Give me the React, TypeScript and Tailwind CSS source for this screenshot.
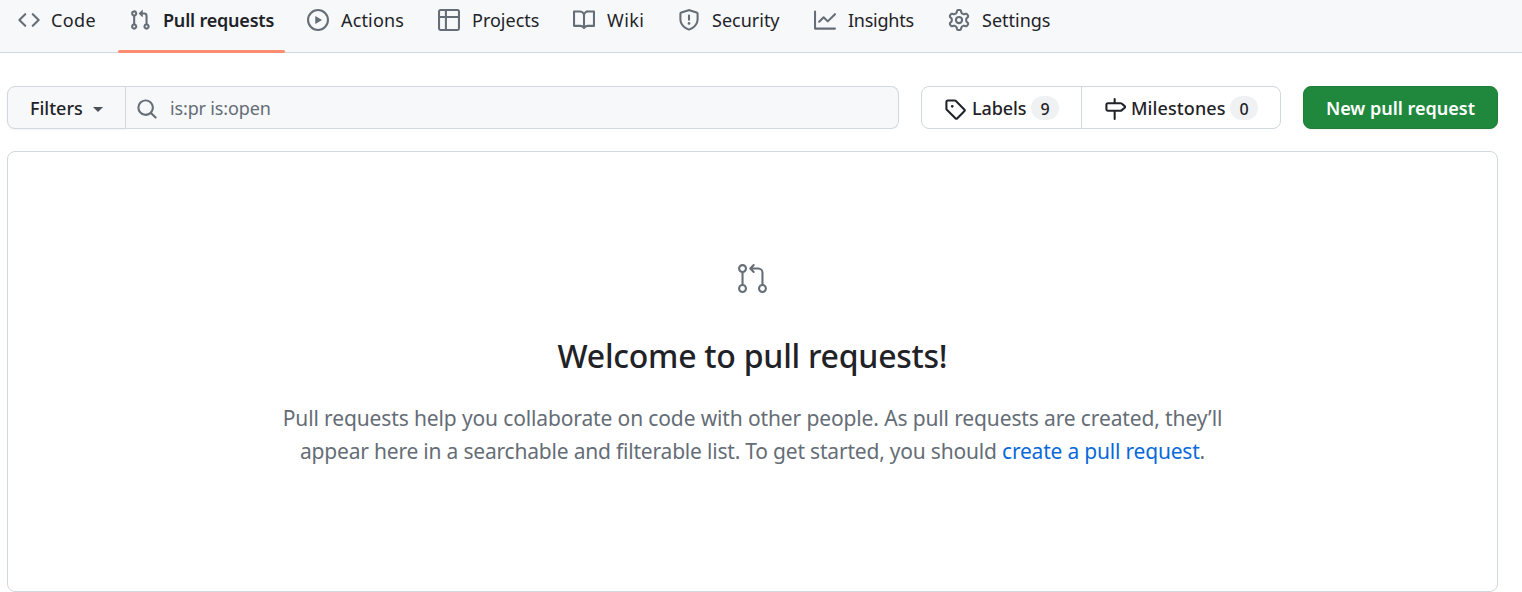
import React from "react";
import { GoGitPullRequest } from "react-icons/go";

const icons = {
  code: "m11.28 3.22 4.25 4.25a.75.75 0 0 1 0 1.06l-4.25 4.25a.749.749 0 0 1-1.275-.326.749.749 0 0 1 .215-.734L13.94 8l-3.72-3.72a.749.749 0 0 1 .326-1.275.749.749 0 0 1 .734.215Zm-6.56 0a.751.751 0 0 1 1.042.018.751.751 0 0 1 .018 1.042L2.06 8l3.72 3.72a.749.749 0 0 1-.326 1.275.749.749 0 0 1-.734-.215L.47 8.53a.75.75 0 0 1 0-1.06Z",
  pull: "M1.5 3.25a2.25 2.25 0 1 1 3 2.122v5.256a2.251 2.251 0 1 1-1.5 0V5.372A2.25 2.25 0 0 1 1.5 3.25Zm5.677-.177L9.573.677A.25.25 0 0 1 10 .854V2.5h1A2.5 2.5 0 0 1 13.5 5v5.628a2.251 2.251 0 1 1-1.5 0V5a1 1 0 0 0-1-1h-1v1.646a.25.25 0 0 1-.427.177L7.177 3.427a.25.25 0 0 1 0-.354ZM3.75 2.5a.75.75 0 1 0 0 1.5.75.75 0 0 0 0-1.5Zm0 9.5a.75.75 0 1 0 0 1.5.75.75 0 0 0 0-1.5Zm8.25.75a.75.75 0 1 0 1.5 0 .75.75 0 0 0-1.5 0Z",
  play: "M8 0a8 8 0 1 1 0 16A8 8 0 0 1 8 0ZM1.5 8a6.5 6.5 0 1 0 13 0 6.5 6.5 0 0 0-13 0Zm4.879-2.773 4.264 2.559a.25.25 0 0 1 0 .428l-4.264 2.559A.25.25 0 0 1 6 10.559V5.442a.25.25 0 0 1 .379-.215Z",
  table: "M0 1.75C0 .784.784 0 1.75 0h12.5C15.216 0 16 .784 16 1.75v12.5A1.75 1.75 0 0 1 14.25 16H1.75A1.75 1.75 0 0 1 0 14.25ZM6.5 6.5v8h7.75a.25.25 0 0 0 .25-.25V6.5Zm8-1.5V1.75a.25.25 0 0 0-.25-.25H6.5V5Zm-13 1.5v7.75c0 .138.112.25.25.25H5v-8ZM5 5V1.5H1.75a.25.25 0 0 0-.25.25V5Z",
  book: "M0 1.75A.75.75 0 0 1 .75 1h4.253c1.227 0 2.317.59 3 1.501A3.743 3.743 0 0 1 11.006 1h4.245a.75.75 0 0 1 .75.75v10.5a.75.75 0 0 1-.75.75h-4.507a2.25 2.25 0 0 0-1.591.659l-.622.621a.75.75 0 0 1-1.06 0l-.622-.621A2.25 2.25 0 0 0 5.258 13H.75a.75.75 0 0 1-.75-.75Zm7.251 10.324.004-5.073-.002-2.253A2.25 2.25 0 0 0 5.003 2.5H1.5v9h3.757a3.75 3.75 0 0 1 1.994.574ZM8.755 4.75l-.004 7.322a3.752 3.752 0 0 1 1.992-.572H14.5v-9h-3.495a2.25 2.25 0 0 0-2.25 2.25Z",
  shield: "M7.467.133a1.748 1.748 0 0 1 1.066 0l5.25 1.68A1.75 1.75 0 0 1 15 3.48V7c0 1.566-.32 3.182-1.303 4.682-.983 1.498-2.585 2.813-5.032 3.855a1.697 1.697 0 0 1-1.33 0c-2.447-1.042-4.049-2.357-5.032-3.855C1.32 10.182 1 8.566 1 7V3.48a1.75 1.75 0 0 1 1.217-1.667Zm.61 1.429a.25.25 0 0 0-.153 0l-5.25 1.68a.25.25 0 0 0-.174.238V7c0 1.358.275 2.666 1.057 3.86.784 1.194 2.121 2.34 4.366 3.297a.196.196 0 0 0 .154 0c2.245-.956 3.582-2.104 4.366-3.298C13.225 9.666 13.5 8.36 13.5 7V3.48a.251.251 0 0 0-.174-.237l-5.25-1.68ZM8.75 4.75v3a.75.75 0 0 1-1.5 0v-3a.75.75 0 0 1 1.5 0ZM9 10.5a1 1 0 1 1-2 0 1 1 0 0 1 2 0Z",
  graph: "M1.5 1.75V13.5h13.75a.75.75 0 0 1 0 1.5H.75a.75.75 0 0 1-.75-.75V1.75a.75.75 0 0 1 1.5 0Zm14.28 2.53-5.25 5.25a.75.75 0 0 1-1.06 0L7 7.06 4.28 9.78a.751.751 0 0 1-1.042-.018.751.751 0 0 1-.018-1.042l3.25-3.25a.75.75 0 0 1 1.06 0L10 7.94l4.72-4.72a.751.751 0 0 1 1.042.018.751.751 0 0 1 .018 1.042Z",
  gear: "M8 0a8.2 8.2 0 0 1 .701.031C9.444.095 9.99.645 10.16 1.29l.288 1.107c.018.066.079.158.212.224.231.114.454.243.668.386.123.082.233.09.299.071l1.103-.303c.644-.176 1.392.021 1.82.63.27.385.506.792.704 1.218.315.675.111 1.422-.364 1.891l-.814.806c-.049.048-.098.147-.088.294.016.257.016.515 0 .772-.01.147.038.246.088.294l.814.806c.475.469.679 1.216.364 1.891a7.977 7.977 0 0 1-.704 1.217c-.428.61-1.176.807-1.82.63l-1.102-.302c-.067-.019-.177-.011-.3.071a5.909 5.909 0 0 1-.668.386c-.133.066-.194.158-.211.224l-.29 1.106c-.168.646-.715 1.196-1.458 1.26a8.006 8.006 0 0 1-1.402 0c-.743-.064-1.289-.614-1.458-1.26l-.289-1.106c-.018-.066-.079-.158-.212-.224a5.738 5.738 0 0 1-.668-.386c-.123-.082-.233-.09-.299-.071l-1.103.303c-.644.176-1.392-.021-1.82-.63a8.12 8.12 0 0 1-.704-1.218c-.315-.675-.111-1.422.363-1.891l.815-.806c.05-.048.098-.147.088-.294a6.214 6.214 0 0 1 0-.772c.01-.147-.038-.246-.088-.294l-.815-.806C.635 6.045.431 5.298.746 4.623a7.92 7.92 0 0 1 .704-1.217c.428-.61 1.176-.807 1.82-.63l1.102.302c.067.019.177.011.3-.071.214-.143.437-.272.668-.386.133-.066.194-.158.211-.224l.29-1.106C6.009.645 6.556.095 7.299.03 7.53.01 7.764 0 8 0Zm-.571 1.525c-.036.003-.108.036-.137.146l-.289 1.105c-.147.561-.549.967-.998 1.189-.173.086-.34.183-.5.29-.417.278-.97.423-1.529.27l-1.103-.303c-.109-.03-.175.016-.195.045-.22.312-.412.644-.573.99-.014.031-.021.11.059.19l.815.806c.411.406.562.957.53 1.456a4.709 4.709 0 0 0 0 .582c.032.499-.119 1.05-.53 1.456l-.815.806c-.081.08-.073.159-.059.19.162.346.353.677.573.989.02.03.085.076.195.046l1.102-.303c.56-.153 1.113-.008 1.53.27.161.107.328.204.501.29.447.222.85.629.997 1.189l.289 1.105c.029.109.101.143.137.146a6.6 6.6 0 0 0 1.142 0c.036-.003.108-.036.137-.146l.289-1.105c.147-.561.549-.967.998-1.189.173-.086.34-.183.5-.29.417-.278.97-.423 1.529-.27l1.103.303c.109.029.175-.016.195-.045.22-.313.411-.644.573-.99.014-.031.021-.11-.059-.19l-.815-.806c-.411-.406-.562-.957-.53-1.456a4.709 4.709 0 0 0 0-.582c-.032-.499.119-1.05.53-1.456l.815-.806c.081-.08.073-.159.059-.19a6.464 6.464 0 0 0-.573-.989c-.02-.03-.085-.076-.195-.046l-1.102.303c-.56.153-1.113.008-1.53-.27a4.44 4.44 0 0 0-.501-.29c-.447-.222-.85-.629-.997-1.189l-.289-1.105c-.029-.11-.101-.143-.137-.146a6.6 6.6 0 0 0-1.142 0ZM11 8a3 3 0 1 1-6 0 3 3 0 0 1 6 0ZM9.5 8a1.5 1.5 0 1 0-3.001.001A1.5 1.5 0 0 0 9.5 8Z",
  search: "M10.68 11.74a6 6 0 0 1-7.922-8.982 6 6 0 0 1 8.982 7.922l3.04 3.04a.749.749 0 0 1-.326 1.275.749.749 0 0 1-.734-.215ZM11.5 7a4.499 4.499 0 1 0-8.997 0A4.499 4.499 0 0 0 11.5 7Z",
  tag: "M1 7.775V2.75C1 1.784 1.784 1 2.75 1h5.025c.464 0 .91.184 1.238.513l6.25 6.25a1.75 1.75 0 0 1 0 2.474l-5.026 5.026a1.75 1.75 0 0 1-2.474 0l-6.25-6.25A1.752 1.752 0 0 1 1 7.775Zm1.5 0c0 .066.026.13.073.177l6.25 6.25a.25.25 0 0 0 .354 0l5.025-5.025a.25.25 0 0 0 0-.354l-6.25-6.25a.25.25 0 0 0-.177-.073H2.75a.25.25 0 0 0-.25.25ZM6 5a1 1 0 1 1 0 2 1 1 0 0 1 0-2Z",
  milestone: "M7.75 0a.75.75 0 0 1 .75.75V3h3.634c.414 0 .814.147 1.13.414l2.07 1.75a1.75 1.75 0 0 1 0 2.672l-2.07 1.75a1.75 1.75 0 0 1-1.13.414H8.5v5.25a.75.75 0 0 1-1.5 0V10H2.75A1.75 1.75 0 0 1 1 8.25v-3.5C1 3.784 1.784 3 2.75 3H7V.75A.75.75 0 0 1 7.75 0Zm4.384 8.5a.25.25 0 0 0 .161-.06l2.07-1.75a.248.248 0 0 0 0-.38l-2.07-1.75a.25.25 0 0 0-.161-.06H2.75a.25.25 0 0 0-.25.25v3.5c0 .138.112.25.25.25h9.384Z",
};

type IconName = keyof typeof icons;

function Icon({ name, className = "" }: { name: IconName; className?: string }) {
  return (
    <svg viewBox="0 0 16 16" className={`size-[22px] shrink-0 fill-current ${className}`} aria-hidden="true">
      <path d={icons[name]} />
    </svg>
  );
}

const tabs: { icon: IconName; label: string; width: string; text: string; active?: boolean }[] = [
  { icon: "code", label: "Code", width: "w-[100px]", text: "tracking-[0.4px]" },
  { icon: "pull", label: "Pull requests", width: "w-[167px]", text: "ml-px tracking-[-0.2px]", active: true },
  { icon: "play", label: "Actions", width: "w-[120px]", text: "ml-px tracking-[0.15px]" },
  { icon: "table", label: "Projects", width: "w-[124px]", text: "ml-px" },
  { icon: "book", label: "Wiki", width: "w-[94px]", text: "ml-px tracking-[0.4px]" },
  { icon: "shield", label: "Security", width: "w-[125px]", text: "ml-px" },
  { icon: "graph", label: "Insights", width: "w-[123px]", text: "ml-px tracking-[-0.25px]" },
  { icon: "gear", label: "Settings", width: "w-[125px]", text: "ml-px" },
];

function Tab({ icon, label, width, text, active }: (typeof tabs)[number]) {
  return (
    <a className={`flex h-[53px] shrink-0 flex-col justify-between ${width}`}>
      <span className="flex h-10 items-center gap-[11px] pl-[11px]">
        <Icon name={icon} className="text-[#656d76]" />
        <span className={`whitespace-nowrap ${active ? "font-semibold" : ""} ${text}`}>{label}</span>
      </span>
      {active && <span className="h-[3px] rounded-full bg-[#fd8c73]" />}
    </a>
  );
}

function Count({ children }: { children: React.ReactNode }) {
  return (
    <span className="flex h-6 w-7 items-center justify-center rounded-full bg-[#eff1f3] pt-[2px] text-[16px]">
      {children}
    </span>
  );
}

export default function App() {
  return (
    <div className="h-[592px] overflow-hidden bg-white font-['Noto_Sans',sans-serif] text-[18px] leading-7 text-[#1f2328]">
      <nav className="flex h-[53px] gap-[11px] border-b border-[#d0d7de] bg-[#f6f8fa] pl-[7px]">
        {tabs.map((tab) => (
          <Tab key={tab.label} {...tab} />
        ))}
      </nav>

      <main className="pt-[33px] pr-6 pl-[7px]">
        <div className="flex h-[43px]">
          <button className="flex w-[119px] items-center rounded-l-lg border border-[#d0d7de] bg-[#f6f8fa] pl-[22px] font-medium shadow-xs">
            <span>Filters</span>
            <span className="mt-[3px] ml-[10px] border-x-[5px] border-t-[5px] border-x-transparent border-t-[#4b5158]" />
          </button>
          <div className="flex w-[773px] items-center rounded-r-lg border border-l-0 border-[#d0d7de] bg-[#f6f8fa] pl-[10px] text-[#656d76]">
            <Icon name="search" className="mt-[3px]" />
            <span className="ml-3 tracking-[-0.15px]">is:pr is:open</span>
          </div>
          <div className="ml-[22px] flex w-[360px] rounded-lg border border-[#d0d7de] font-medium">
            <a className="flex w-[160px] items-center border-r border-[#d0d7de] pl-[22px]">
              <Icon name="tag" className="mt-[3px]" />
              <span className="ml-[6px] w-[59px] tracking-[-0.1px]">Labels</span>
              <Count>9</Count>
            </a>
            <a className="flex flex-1 items-center pl-[22px]">
              <Icon name="milestone" className="mt-[3px]" />
              <span className="ml-[5px] w-[99px] tracking-[0.1px]">Milestones</span>
              <Count>0</Count>
            </a>
          </div>
          <button className="ml-[22px] flex w-[195px] items-center justify-center rounded-lg border border-[#1f7f39] bg-[#1f883d] font-semibold text-white shadow-xs">
            New pull request
          </button>
        </div>

        <section className="mt-[22px] flex h-[441px] flex-col items-center rounded-lg border border-[#d0d7de] pt-[110px] text-center">
          <GoGitPullRequest className="size-[33px] text-[#656d76]" />
          <h1 className="mt-[37px] text-[32px] leading-[48px] font-medium tracking-[-0.25px]">
            Welcome to pull requests!
          </h1>
          <p className="mt-[22px] text-[21px] leading-[33px] text-[#656d76]">
            <span className="block tracking-[-0.13px] whitespace-nowrap">
              Pull requests help you collaborate on code with other people. As pull requests are created, they’ll
            </span>
            <span className="block tracking-[-0.2px] whitespace-nowrap">
              appear here in a searchable and filterable list. To get started, you should{" "}
              <a className="text-[#0969da]">create a pull request</a>.
            </span>
          </p>
        </section>
      </main>
    </div>
  );
}
